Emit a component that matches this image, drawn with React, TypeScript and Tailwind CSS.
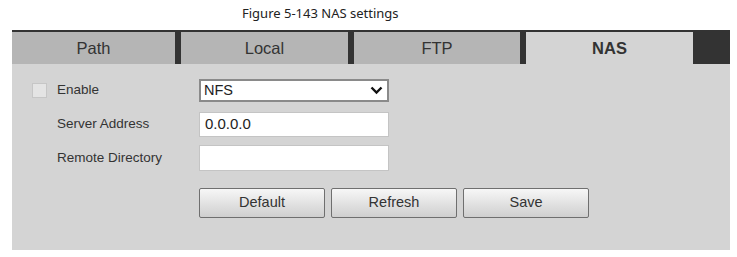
const tabs = [
  { label: "Path", width: "w-[163px]", active: false },
  { label: "Local", width: "w-[167px]", active: false },
  { label: "FTP", width: "w-[166px]", active: false },
  { label: "NAS", width: "w-[167px]", active: true },
];

const buttons = ["Default", "Refresh", "Save"];

const App = () => {
  return (
    <div className="w-[737px] h-[257px] bg-white font-['Liberation_Sans',Arial,sans-serif] text-[#333]">
      <div className="h-[30px] pl-[242px] pt-[4px] font-['Noto_Sans',sans-serif] text-[13px] leading-[18px] text-[#222]">
        Figure 5-143 NAS settings
      </div>

      <div className="ml-[12px] w-[718px]">
        <div className="flex gap-[6px] bg-[#333] pt-[2px] h-[34px]">
          {tabs.map((tab) => (
            <div
              key={tab.label}
              className={
                tab.active
                  ? `${tab.width} flex items-center justify-center bg-[#d4d4d4] text-[16.5px] font-bold text-[#333]`
                  : `${tab.width} flex items-center justify-center bg-[#b5b5b5] text-[16.5px] text-[#333]`
              }
            >
              {tab.label}
            </div>
          ))}
        </div>

        <div className="h-[186px] bg-[#d4d4d4] pl-[20px] pt-[15px]">
          <div className="flex items-center h-[23px]">
            <div className="flex items-center w-[167px]">
              <div className="w-[15px] h-[15px] border border-[#c6c6c6] bg-[#e4e4e4]" />
              <span className="ml-[10px] text-[13.5px]">Enable</span>
            </div>
            <div className="flex items-center justify-between w-[190px] h-[23px] border-2 border-[#8a8a8a] bg-white pl-[3px] pr-[4px] text-[14.5px] text-[#222]">
              <span>NFS</span>
              <svg width="13" height="9" viewBox="0 0 13 9">
                <polyline points="1.5,1.5 6.5,6.5 11.5,1.5" fill="none" stroke="#111" strokeWidth="2.4" />
              </svg>
            </div>
          </div>

          <div className="flex items-center h-[25px] mt-[10px]">
            <span className="w-[167px] pl-[25px] text-[13.5px]">Server Address</span>
            <div className="flex items-center w-[190px] h-[25px] border border-[#c4c4c4] bg-white pl-[5px] text-[15px] text-[#222]">
              0.0.0.0
            </div>
          </div>

          <div className="flex items-center h-[26px] mt-[8px]">
            <span className="w-[167px] pl-[25px] text-[13.5px]">Remote Directory</span>
            <div className="w-[190px] h-[26px] border border-[#c4c4c4] bg-white" />
          </div>

          <div className="flex gap-[6px] ml-[167px] mt-[17px]">
            {buttons.map((b) => (
              <div
                key={b}
                className="flex items-center justify-center w-[126px] h-[30px] rounded-[2px] border border-[#6f6f6f] bg-gradient-to-b from-[#f7f7f7] to-[#cfcfcf] text-[14.5px] text-[#333]"
              >
                {b}
              </div>
            ))}
          </div>
        </div>
      </div>
    </div>
  );
};

export default App;
